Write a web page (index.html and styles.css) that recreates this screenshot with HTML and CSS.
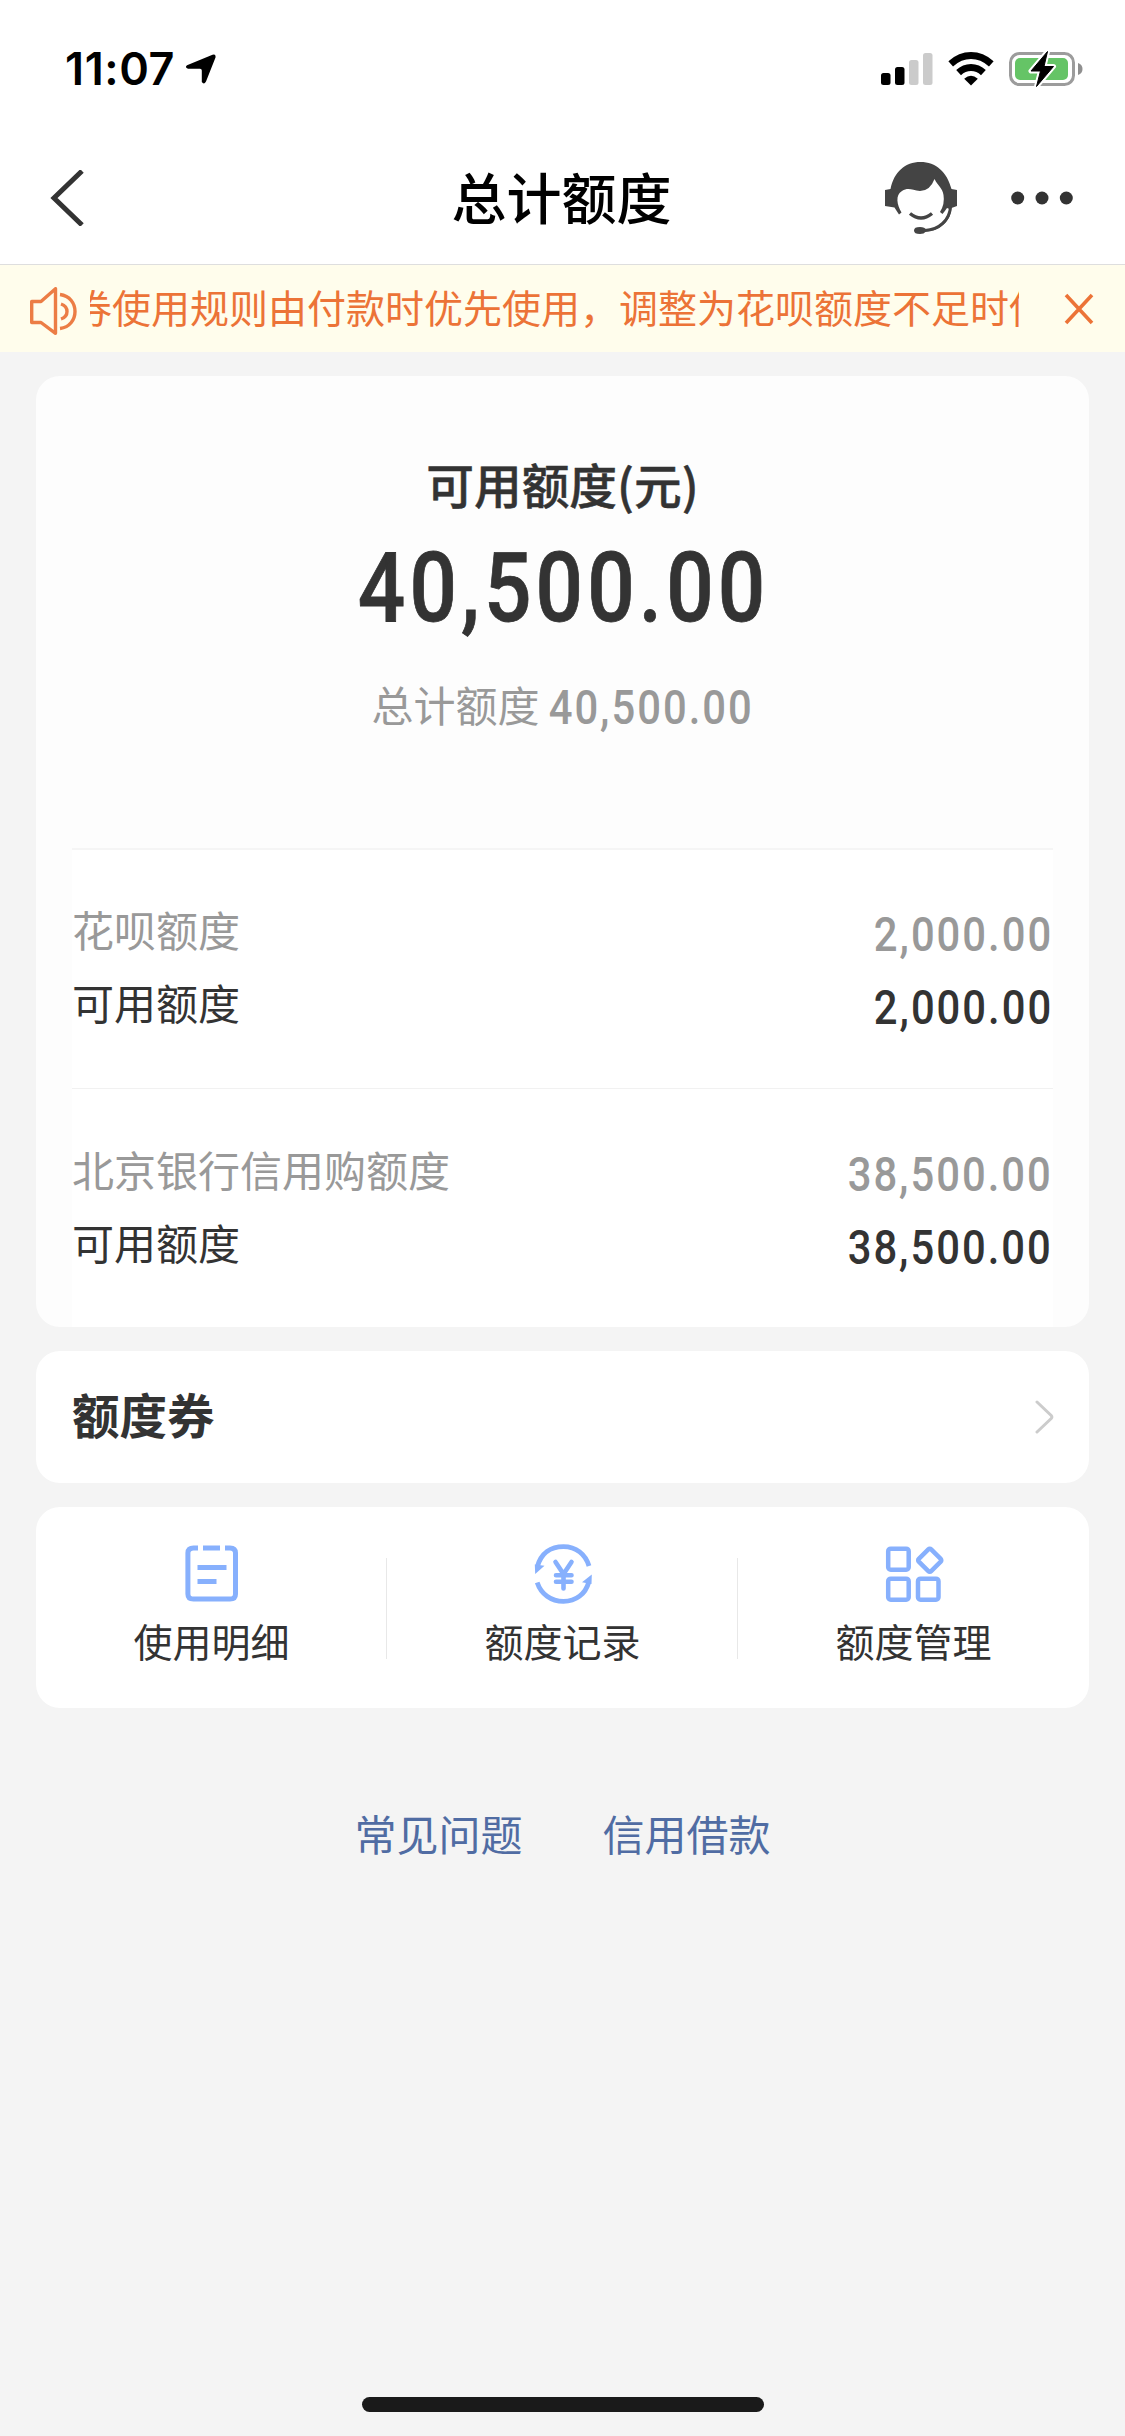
FILE: index.html
```html
<!DOCTYPE html>
<html lang="zh-CN">
<head>
<meta charset="utf-8">
<title>总计额度</title>
<link rel="stylesheet" href="styles.css">
</head>
<body>
<div class="page">
  <header class="status">
    <div class="status-left">
      <span class="time">11:07</span>
      <svg class="location" width="30" height="30" viewBox="0 0 30 30"><path d="M26.500 0.800Q30 -.5 29.500 3.500L20 27.500Q18 31 15.800 28V16.500Q15.800 14.800 14 14.800L2 14.800Q-1.500 13.500 1 11.200Z"/></svg>
    </div>
    <div class="status-right">
      <svg width="52" height="34" viewBox="0 0 52 34"><rect y="21" width="9.500" height="12" rx="2.500"/><rect x="14" y="15" width="9.500" height="18" rx="2.500"/><g fill="#cbcbcb"><rect x="28" y="8" width="9.500" height="25" rx="2.500"/><rect x="42" y="1" width="9.500" height="32" rx="2.500"/></g></svg>
      <svg width="46" height="34" viewBox="0 0 46 34"><g fill="none" stroke="#000" stroke-width="7"><path d="M2.700 11.800Q12 3.500 23 3.500T43.300 11.800"/><path d="M10.600 20.600Q16 15.500 23 15.500T35.400 20.600"/></g><path d="M16.200 26.700Q23 20.700 29.800 26.700L23 33.500Z"/></svg>
      <svg width="74" height="38" viewBox="0 0 74 38"><rect x="1.500" y="3.500" width="63" height="31" rx="9" fill="none" stroke="#9c9c9c" stroke-width="3"/><path d="M69 13Q73.500 14.500 73.500 19T69 25Z" fill="#8f8f8f"/><rect x="6" y="8" width="53" height="22" rx="5" fill="#65c466"/><path d="M38.500 1.500 22 21H31.500L27.500 36.500 44.500 16.500H35Z" stroke="#fff" stroke-width="5" stroke-linejoin="round"/><path d="M38.500 1.500 22 21H31.500L27.500 36.500 44.500 16.500H35Z" stroke="#000" stroke-width="1" stroke-linejoin="round"/></svg>
    </div>
  </header>

  <nav class="nav">
    <svg class="back" width="34" height="56" viewBox="0 0 34 56"><path d="M32 1 4 28 32 55" fill="none" stroke="#333" stroke-width="5"/></svg>
    <h1>总计额度</h1>
    <div class="nav-actions">
      <svg width="72" height="72" viewBox="0 0 72 72" fill="#444"><path d="M5.500 27C9 10 20 0 35.500 0S62 10 66.500 27L72 28V44L66.500 46C66 58 56 69 41 69.500Q39 72 35 72C31 72 29 71 29 68.500S31 65 35 65Q40 65 41 67.500C54 67 63 57 64.500 47L62 46Q60 49 57.500 52L55 50Q60 42 58.500 33C57.500 26 53 24 49.500 17Q45 29 35 29C27 28 23 25 17 29C10 33 12 43 16.500 50.500L14 52.500Q11 48 9.500 45.500L0 44V28Z"/><path d="M25 51.500Q36 60.500 47 51.500" fill="none" stroke="#444" stroke-width="3.400"/><path d="M65.500 45C64.500 58 54 68 40 68.500" fill="none" stroke="#444" stroke-width="3"/></svg>
      <svg width="62" height="14" viewBox="0 0 62 14" fill="#333"><circle cx="6.700" cy="7" r="6.500"/><circle cx="31" cy="7" r="6.500"/><circle cx="55.300" cy="7" r="6.500"/></svg>
    </div>
  </nav>

  <section class="notice">
    <svg class="speaker" width="48" height="48" viewBox="0 0 48 48" fill="none" stroke="#ec7d45" stroke-width="3.400" stroke-linejoin="round"><path d="M1.700 14.500H11L25.500 1.700V46.300L11 35.500H1.700Z"/><path d="M30 7.500C50 10 50 39 30 41.500M31 17Q37 19 37 24.500T31 32"/></svg>
    <div class="marquee"><span>券使用规则由付款时优先使用，调整为花呗额度不足时使</span></div>
    <svg class="close" width="30" height="32" viewBox="0 0 30 32"><path d="M2 2 28 30M28 2 2 30" stroke="#ec7337" stroke-width="3.600"/></svg>
  </section>

  <main>
    <section class="card limits">
      <div class="summary">
        <h2>可用额度(元)</h2>
        <div class="amount">40,500.00</div>
        <div class="total"><span>总计额度</span><span class="num">40,500.00</span></div>
      </div>
      <div class="group">
        <div class="row muted"><span>花呗额度</span><span class="num">2,000.00</span></div>
        <div class="row"><span>可用额度</span><span class="num">2,000.00</span></div>
      </div>
      <div class="group">
        <div class="row muted"><span>北京银行信用购额度</span><span class="num">38,500.00</span></div>
        <div class="row"><span>可用额度</span><span class="num">38,500.00</span></div>
      </div>
    </section>

    <section class="card coupon">
      <h3>额度券</h3>
      <svg width="20" height="34" viewBox="0 0 20 34"><path d="M2 2 16.200 15.500Q17.500 17 16.200 18.500L2 32" fill="none" stroke="#ccc" stroke-width="3" stroke-linecap="round"/></svg>
    </section>

    <section class="card tools">
      <div class="tool">
        <svg width="60" height="60" viewBox="0 0 60 60" fill="none" stroke="#87b0fd" stroke-width="5"><path d="M16 3.900H11.500Q5.900 3.900 5.900 9V50Q5.900 55.100 11.500 55.100H48Q53.500 55.100 53.500 50V9Q53.500 3.900 48 3.900H43M21 3.900H38M15.500 23.500H44.500M15.500 37.500H34.500"/></svg>
        <span>使用明细</span>
      </div>
      <div class="tool">
        <svg width="60" height="60" viewBox="0 0 60 60" fill="none" stroke="#87b0fd" stroke-width="4.800"><path d="M4.200 23C8 9 18 2.600 30.500 2.600S52.500 10 56 22M4.200 38.500C8 50 18 57.400 30.500 57.400S52.500 50 55.800 38"/><path d="M1.800 20.500 11.500 21.800 2.200 30ZM58.800 30.500 49 38.300 58.500 40Z" fill="#87b0fd" stroke="none"/><path d="M22.500 18 30.500 30 38.500 18M30.500 29V44.500M23 31.200H38.500M23 37.800H38.500" stroke-width="4.600" stroke-linecap="round"/></svg>
        <span>额度记录</span>
      </div>
      <div class="tool">
        <svg width="60" height="60" viewBox="0 0 60 60" fill="none" stroke="#87b0fd" stroke-width="4.500"><rect x="4.200" y="4.700" width="20.500" height="21" rx="2.500"/><rect x="4.200" y="34.700" width="20.500" height="21" rx="2.500"/><rect x="34" y="34.700" width="20.500" height="21" rx="2.500"/><rect x="37" y="7.500" width="17.500" height="17.500" rx="2" transform="rotate(45 45.750 16.250)"/></svg>
        <span>额度管理</span>
      </div>
    </section>

    <div class="links"><a>常见问题</a><a>信用借款</a></div>
  </main>
  <div class="home"></div>
</div>
</body>
</html>
```
FILE: styles.css
```css
* { box-sizing: border-box; margin: 0; padding: 0; }
body {
  width: 1125px;
  background: #f4f4f4;
  color: #333;
  font-family: "Noto Sans CJK SC", sans-serif;
}
svg { display: block; flex: none; }
.page { height: 2436px; display: flex; flex-direction: column; }

.status {
  height: 132px;
  padding: 0 42px 0 65px;
  background: #fff;
  display: flex;
  justify-content: space-between;
}
.status-left { display: flex; padding-top: 42px; gap: 12px; }
.time {
  font: 600 45px/54px Inter, sans-serif;
  color: #000;
  width: 109px;
  letter-spacing: 0.6px;
  white-space: nowrap;
}
.location { margin-top: 12px; }
.status-right { display: flex; align-items: center; height: 38px; margin-top: 50px; gap: 15px; }

.nav {
  height: 133px;
  background: #fff;
  border-bottom: 1px solid #dedede;
  padding: 0 52px 0 50px;
  display: grid;
  grid-template-columns: 1fr auto 1fr;
  align-items: center;
}
.nav h1 { font-size: 55px; line-height: 80px; font-weight: 500; color: #000; padding-bottom: 7px; }
.nav-actions { display: flex; align-items: center; justify-content: flex-end; gap: 54px; }

.notice {
  height: 87px;
  background: #fffdec;
  display: flex;
  align-items: center;
  padding: 0 31px 0 30px;
}
.speaker { margin-top: 4px; }
.marquee {
  width: 930px;
  margin: 0 45px 0 12px;
  overflow: hidden;
  white-space: nowrap;
  font-size: 39px;
  line-height: 60px;
  height: 66px;
  color: #ec7337;
}
.marquee span { margin-left: -17px; }

main { padding: 24px 36px 0; display: flex; flex-direction: column; gap: 24px; flex: 1; }
.card { background: #fff; border-radius: 24px; }

.limits { background: #fdfdfd; height: 951px; padding: 0 36px; }
.summary {
  height: 472px;
  padding-top: 84px;
  display: flex;
  flex-direction: column;
  align-items: center;
}
.summary h2 { font-size: 47.7px; line-height: 48px; font-weight: 500; -webkit-text-stroke: 0.5px currentColor; }
.amount {
  font: 500 96px/96px Roboto, sans-serif;
  letter-spacing: 4.8px;
  margin-top: 32px;
  transform: translateX(1px) scaleX(.87);
  -webkit-text-stroke: 0.8px currentColor;
}
.total {
  display: flex;
  align-items: baseline;
  margin-top: 43px;
  font-size: 42px;
  line-height: 50px;
  color: #999;
}
.num {
  font-family: Roboto, sans-serif;
  font-weight: 500;
  font-size: 48px;
  letter-spacing: 2.3px;
  transform-origin: right;
  transform: translateY(4px) scaleX(.87);
}
.total .num { margin-left: -22px; transform: translateY(2px) scaleX(.87); }
.group {
  background: #fff;
  border-top: 1px solid #f1f1f1;
  height: 239px;
  padding-top: 43px;
  width: 981px;
}
.summary + .group { border-top: 2px solid #f5f5f5; height: 240px; padding-top: 42px; }
.row {
  height: 73px;
  display: flex;
  justify-content: space-between;
  align-items: baseline;
  font-size: 42px;
  line-height: 73px;
}
.muted { color: #999; }

.coupon { height: 132px; padding: 0 34px 0 36px; display: flex; align-items: center; justify-content: space-between; }
.coupon h3 { font-size: 47.5px; line-height: 60px; font-weight: 700; padding-bottom: 7px; }

.tools { height: 201px; display: grid; grid-template-columns: repeat(3, 1fr); align-items: center; }
.tool {
  height: 201px;
  padding-top: 37px;
  display: flex;
  flex-direction: column;
  align-items: center;
  font-size: 39px;
  line-height: 40px;
  gap: 16px;
  background: linear-gradient(#e8e8e8, #e8e8e8) no-repeat right 51px / 1px 101px;
}
.tool:last-child { background: none; }

.links { display: flex; justify-content: center; gap: 80px; margin-top: 76px; font-size: 42px; line-height: 50px; color: #506ca3; }

.home { width: 402px; height: 15px; border-radius: 8px; background: #1a1a1a; margin: 0 auto 24px; }
```
